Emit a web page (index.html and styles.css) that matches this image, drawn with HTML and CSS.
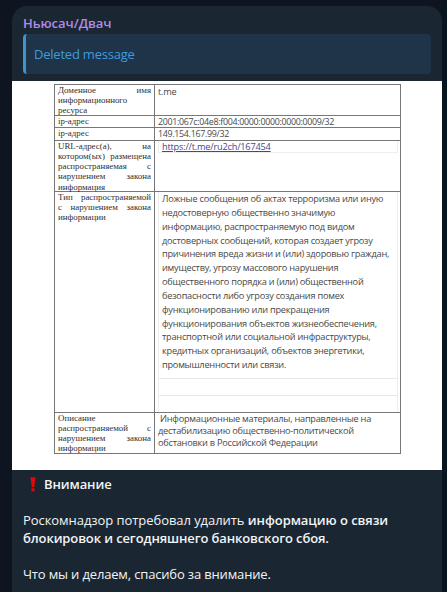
FILE: index.html
```html
<!DOCTYPE html>
<html lang="ru">
<head>
<meta charset="utf-8">
<title>Ньюсач/Двач</title>
<link rel="stylesheet" href="styles.css">
</head>
<body>
<article class="bubble">
  <header class="author">Ньюсач/Двач</header>
  <div class="reply">Deleted message</div>
  <div class="photo">
    <div class="sheet">
      <div class="row row-domain">
        <div class="label"><p class="fill">Доменное имя</p><p>информационного</p><p>ресурса</p></div>
        <div class="value">t.me</div>
      </div>
      <div class="row row-ip6">
        <div class="label"><p>ip-адрес</p></div>
        <div class="value ip">2001:067c:04e8:f004:0000:0000:0000:0009/32</div>
      </div>
      <div class="row row-ip4">
        <div class="label"><p>ip-адрес</p></div>
        <div class="value ip">149.154.167.99/32</div>
      </div>
      <div class="row row-url">
        <div class="label"><p class="fill">URL-адрес(а), на</p><p class="fill">котором(ых) размещена</p><p class="fill">распространяемая с</p><p class="fill">нарушением закона</p><p>информация</p></div>
        <div class="value"><div class="linkbox"><span class="link">https://t.me/ru2ch/167454</span></div></div>
      </div>
      <div class="row row-type">
        <div class="label"><p class="fill">Тип распространяемой</p><p class="fill">с нарушением закона</p><p>информации</p></div>
        <div class="value">
          <div class="inner">
            <div class="reason">Ложные сообщения об актах терроризма или иную<br>недостоверную общественно значимую<br>информацию, распространяемую под видом<br>достоверных сообщений, которая создает угрозу<br>причинения вреда жизни и (или) здоровью граждан,<br>имуществу, угрозу массового нарушения<br>общественного порядка и (или) общественной<br>безопасности либо угрозу создания помех<br>функционированию или прекращения<br>функционирования объектов жизнеобеспечения,<br>транспортной или социальной инфраструктуры,<br>кредитных организаций, объектов энергетики,<br>промышленности или связи.</div>
            <div class="blank"></div>
            <div class="blank"></div>
          </div>
        </div>
      </div>
      <div class="row row-desc">
        <div class="label"><p>Описание</p><p class="fill">распространяемой с</p><p class="fill">нарушением закона</p><p>информации</p></div>
        <div class="value"><span class="indent">Информационные материалы, направленные на</span><br>дестабилизацию общественно-политической<br>обстановки в Российской Федерации</div>
      </div>
    </div>
  </div>
  <div class="text">
    <p class="alert"><svg class="mark" viewBox="0 0 6 15" width="6" height="15"><path d="M.3.2h5.4L4.2 10H1.8z" fill="#df0909"/><circle cx="3" cy="12.8" r="1.8" fill="#df0909"/></svg><b>Внимание</b></p>
    <p class="gap lead">Роскомнадзор потребовал удалить <b>информацию о связи</b></p>
    <p class="subject"><b>блокировок и сегодняшнего банковского сбоя.</b></p>
    <p class="gap closing">Что мы и делаем, спасибо за внимание.</p>
  </div>
</article>
</body>
</html>
```
FILE: styles.css
```css
* { box-sizing: border-box; }
body {
  margin: 0;
  height: 592px;
  overflow: hidden;
  padding: 6px 5px 0 12px;
  background: linear-gradient(90deg, #0e1520 0 440px, #07151f 443px);
  font-family: "Open Sans", "Noto Sans", sans-serif;
}
p { margin: 0; }
.bubble {
  width: 430px;
  height: 600px;
  background: #1a2733;
  border-radius: 15px 15px 0 0;
}
.author {
  height: 28px;
  padding: 8px 0 0 11px;
  font-size: 13px;
  line-height: 18px;
  font-weight: 600;
  letter-spacing: -0.04px;
  color: #b18be8;
  white-space: nowrap;
}
.reply {
  height: 40px;
  margin: 0 11px;
  padding-left: 8px;
  border-left: 3px solid #3d94d2;
  border-radius: 4px;
  background: #1f3449;
  font-size: 13px;
  line-height: 41px;
  letter-spacing: -0.22px;
  color: #3f9bdf;
}
.photo {
  height: 389px;
  margin-top: 7px;
  padding: 3px 41px 0 42px;
  background: #fff;
}
.sheet {
  width: 347px;
  height: 370px;
  border: 1px solid #777;
  border-top: 0;
  color: #484848;
}
.row {
  display: grid;
  grid-template-columns: 100px 1fr;
  border-top: 1px solid #777;
}
.row-domain { height: 31px; }
.row-ip6 { height: 12px; }
.row-ip4 { height: 13px; }
.row-url { height: 51px; }
.row-type { height: 221px; }
.row-desc { height: 41px; }
.label {
  padding: 0 3px;
  border-right: 1px solid #777;
  font: 8.9px/10.15px "Liberation Serif", serif;
  color: #303030;
  white-space: nowrap;
}
.fill { text-align-last: justify; }
.value {
  padding-left: 3px;
  font-size: 9.2px;
  line-height: 12px;
  letter-spacing: -0.24px;
  white-space: nowrap;
}
.row-domain .value { padding-top: 1px; }
.row-ip6 .value { line-height: 11px; }
.ip { font-size: 8.9px; letter-spacing: -0.31px; }
.linkbox {
  width: 240px;
  height: 12px;
  padding-left: 3px;
  border: 1px solid #eee;
  border-top: 0;
  line-height: 12px;
  letter-spacing: -0.2px;
}
.link { color: #464494; text-decoration: underline; }
.inner {
  width: 240px;
  height: 220px;
  border: 1px solid #eee;
  border-width: 0 1px;
}
.reason { height: 186px; padding-left: 3px; line-height: 13.85px; }
.blank { height: 17px; border-top: 1px solid #e8e8e8; }
.indent { margin-left: 2px; }
.text {
  padding: 5px 0 0 11px;
  font-size: 13px;
  line-height: 18px;
  color: #f2f4f6;
  white-space: nowrap;
}
.text b { font-weight: 600; }
.alert { display: flex; align-items: center; letter-spacing: -0.1px; }
.mark { margin: 0 8px 0 7px; }
.gap { margin-top: 18px; }
.lead { letter-spacing: -0.06px; }
.subject { letter-spacing: -0.12px; }
.closing { letter-spacing: -0.16px; }
```
